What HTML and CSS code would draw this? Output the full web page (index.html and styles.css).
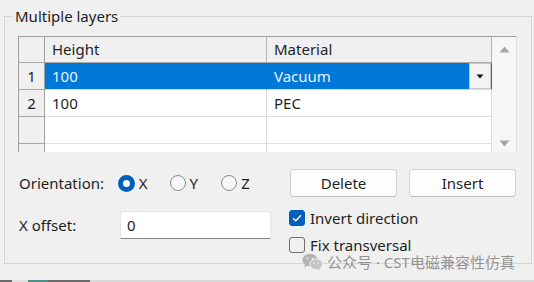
FILE: index.html
```html
<!DOCTYPE html>
<html lang="en">
<head>
    <meta charset="UTF-8">
    <title>Multiple layers</title>
    <link rel="stylesheet" href="styles.css">
</head>
<body>
    <fieldset class="group">
        <legend>Multiple layers</legend>
        <div class="grid-box">
            <div class="grid">
                <div class="row head">
                    <div class="cell corner"></div>
                    <div class="cell">Height</div>
                    <div class="cell">Material</div>
                </div>
                <div class="row selected">
                    <div class="cell num">1</div>
                    <div class="cell">100</div>
                    <div class="cell combo">
                        <span class="combo-text">Vacuum</span>
                        <span class="drop">
                            <svg width="8" height="5" viewBox="0 0 8 5"><path d="M0.5 0.5 H7.5 L4 4.5 Z" fill="#111"/></svg>
                        </span>
                    </div>
                </div>
                <div class="row">
                    <div class="cell num">2</div>
                    <div class="cell">100</div>
                    <div class="cell">PEC</div>
                </div>
                <div class="row">
                    <div class="cell num"></div>
                    <div class="cell"></div>
                    <div class="cell"></div>
                </div>
                <div class="row">
                    <div class="cell num"></div>
                    <div class="cell"></div>
                    <div class="cell"></div>
                </div>
            </div>
            <div class="scrollbar">
                <svg width="11" height="7" viewBox="0 0 11 7"><path d="M0.5 6.5 L5.5 0.5 L10.5 6.5 Z" fill="#a6a6a6"/></svg>
                <svg width="11" height="7" viewBox="0 0 11 7"><path d="M0.5 0.5 L5.5 6.5 L10.5 0.5 Z" fill="#a6a6a6"/></svg>
            </div>
        </div>

        <div class="controls">
            <div class="left">
                <div class="line">
                    <span class="label">Orientation:</span>
                    <label class="option"><span class="radio on"></span>X</label>
                    <label class="option"><span class="radio"></span>Y</label>
                    <label class="option"><span class="radio"></span>Z</label>
                </div>
                <div class="line">
                    <span class="label">X offset:</span>
                    <div class="input">0</div>
                </div>
            </div>
            <div class="right">
                <div class="buttons">
                    <button class="btn">Delete</button>
                    <button class="btn">Insert</button>
                </div>
                <div class="checks">
                    <label class="check-line">
                        <span class="check on">
                            <svg width="10" height="8" viewBox="0 0 10 8"><path d="M1 4.2 L3.8 6.8 L9 1.2" fill="none" stroke="#fff" stroke-width="1.3"/></svg>
                        </span>
                        Invert direction
                    </label>
                    <label class="check-line">
                        <span class="check"></span>
                        Fix transversal
                    </label>
                </div>
            </div>
        </div>
    </fieldset>

    <!-- 水印 -->
    <div class="watermark">
        <svg width="21" height="18" viewBox="0 0 21 18">
            <ellipse cx="8" cy="7" rx="7.5" ry="6.3" fill="#b4b4b4"/>
            <path d="M3 11.5 L2.2 14.5 L6 12.6 Z" fill="#b4b4b4"/>
            <ellipse cx="14.2" cy="11.2" rx="6.3" ry="5.3" fill="#c4c4c4" stroke="#f0f0f0" stroke-width="1"/>
            <path d="M17.5 15 L18.6 17.4 L15.4 16 Z" fill="#c4c4c4"/>
            <circle cx="5.5" cy="5.5" r="0.9" fill="#f0f0f0"/>
            <circle cx="10.5" cy="5.5" r="0.9" fill="#f0f0f0"/>
            <circle cx="12.2" cy="10.3" r="0.8" fill="#f0f0f0"/>
            <circle cx="16.2" cy="10.3" r="0.8" fill="#f0f0f0"/>
        </svg>
        <span>公众号 · CST电磁兼容性仿真</span>
    </div>
    <div class="strip"></div>
</body>
</html>
```

FILE: styles.css
```css
body {
    margin: 0;
    height: 282px;
    background-color: #f0f0f0;
    font-family: "Noto Sans", "Liberation Sans", sans-serif;
    font-size: 15px;
    color: #1e1e1e;
    overflow: hidden;
    position: relative;
}
.group {
    margin: 6px 2px 0 4px;
    padding: 10px 14px 0 13px;
    height: 258px;
    box-sizing: border-box;
    border: 1px solid #d6d6d6;
    min-width: 0;
}
.group legend {
    padding: 0 2px;
    margin-left: -5px;
    line-height: 20px;
}

/* table */
.grid-box {
    display: flex;
    height: 116px;
    border-top: 1px solid #a0a0a0;
    border-left: 1px solid #a0a0a0;
    border-right: 1px solid #e2e2e2;
    box-sizing: border-box;
    overflow: hidden;
}
.grid {
    width: 473px;
    background-color: #ffffff;
}
.row {
    display: grid;
    grid-template-columns: 26px 222px 225px;
    height: 27px;
}
.cell {
    box-sizing: border-box;
    border-right: 1px solid #dcdcdc;
    border-bottom: 1px solid #dcdcdc;
    padding-left: 7px;
    line-height: 26px;
    white-space: nowrap;
    overflow: hidden;
}
.row.head {
    height: 26px;
}
.row.head .cell {
    background-color: #f0f0f0;
    border-right-color: #b4b4b4;
    border-bottom-color: #a8a8a8;
    line-height: 25px;
}
.cell.num {
    background-color: #f0f0f0;
    border-right-color: #a0a0a0;
    border-bottom-color: #a8a8a8;
    padding-left: 0;
    text-align: center;
}
.row.head .corner {
    border-right-color: #a0a0a0;
}
.row.selected .cell:not(.num) {
    background-color: #0078d7;
    color: #e8f2fc;
    border-right-color: #0078d7;
}
.cell.combo {
    display: flex;
    padding-right: 0;
}
.combo-text {
    flex: 1;
}
.drop {
    width: 22px;
    height: 26px;
    box-sizing: border-box;
    background-color: #f3f3f3;
    border: 1px solid #c8c8c8;
    display: flex;
    align-items: center;
    justify-content: center;
}
.scrollbar {
    flex: 1;
    background-color: #f6f6f6;
    display: flex;
    flex-direction: column;
    align-items: center;
    justify-content: space-between;
    padding: 9px 0 5px;
}

/* controls */
.controls {
    display: flex;
    gap: 18px;
    margin-top: 17px;
    padding-left: 1px;
}
.left {
    width: 252px;
    display: flex;
    flex-direction: column;
    gap: 14px;
}
.line {
    display: flex;
    align-items: center;
    height: 28px;
}
.label {
    width: 101px;
}
.option {
    width: 54px;
    display: flex;
    align-items: center;
    gap: 4px;
}
.radio {
    width: 16px;
    height: 16px;
    box-sizing: border-box;
    border-radius: 50%;
    border: 1.5px solid #8a8a8a;
    background-color: #f7f7f7;
    margin-left: 2px;
}
.radio.on {
    width: 17px;
    height: 17px;
    border: 5px solid #005fb8;
    background-color: #ffffff;
}
.input {
    width: 151px;
    height: 28px;
    box-sizing: border-box;
    background-color: #ffffff;
    border: 1px solid #e6e6e6;
    border-bottom-color: #868686;
    border-radius: 4px 4px 0 0;
    padding-left: 6px;
    line-height: 26px;
}
.right {
    flex: 1;
}
.buttons {
    display: flex;
    gap: 12px;
    padding-left: 1px;
}
.btn {
    width: 107px;
    height: 28px;
    font-family: inherit;
    font-size: 15px;
    color: #1e1e1e;
    background-color: #fdfdfd;
    border: 1px solid #d2d2d2;
    border-bottom-color: #bcbcbc;
    border-radius: 4px;
    padding: 0;
}
.checks {
    margin-top: 10px;
    display: flex;
    flex-direction: column;
    gap: 5px;
}
.check-line {
    display: flex;
    align-items: center;
    gap: 5px;
    height: 22px;
}
.check {
    width: 16px;
    height: 16px;
    box-sizing: border-box;
    border: 1px solid #707070;
    border-radius: 3px;
    display: flex;
    align-items: center;
    justify-content: center;
}
.check.on {
    background-color: #005fb8;
    border-color: #005fb8;
}

/* watermark over the bottom edge */
.watermark {
    position: absolute;
    left: 302px;
    top: 251px;
    display: flex;
    align-items: center;
    gap: 4px;
    font-family: "Noto Sans", "Noto Sans CJK SC", sans-serif;
    font-size: 15px;
    color: rgba(130, 130, 130, 0.85);
}
.strip {
    position: absolute;
    left: 0;
    right: 0;
    bottom: 0;
    height: 2px;
    background: linear-gradient(90deg, #6a6a6a 0 12px, #e0e0e0 12px 28px, #4f8f86 28px 48px, #6a6a6a 48px 90px, #d8d8d8 90px);
}
```
